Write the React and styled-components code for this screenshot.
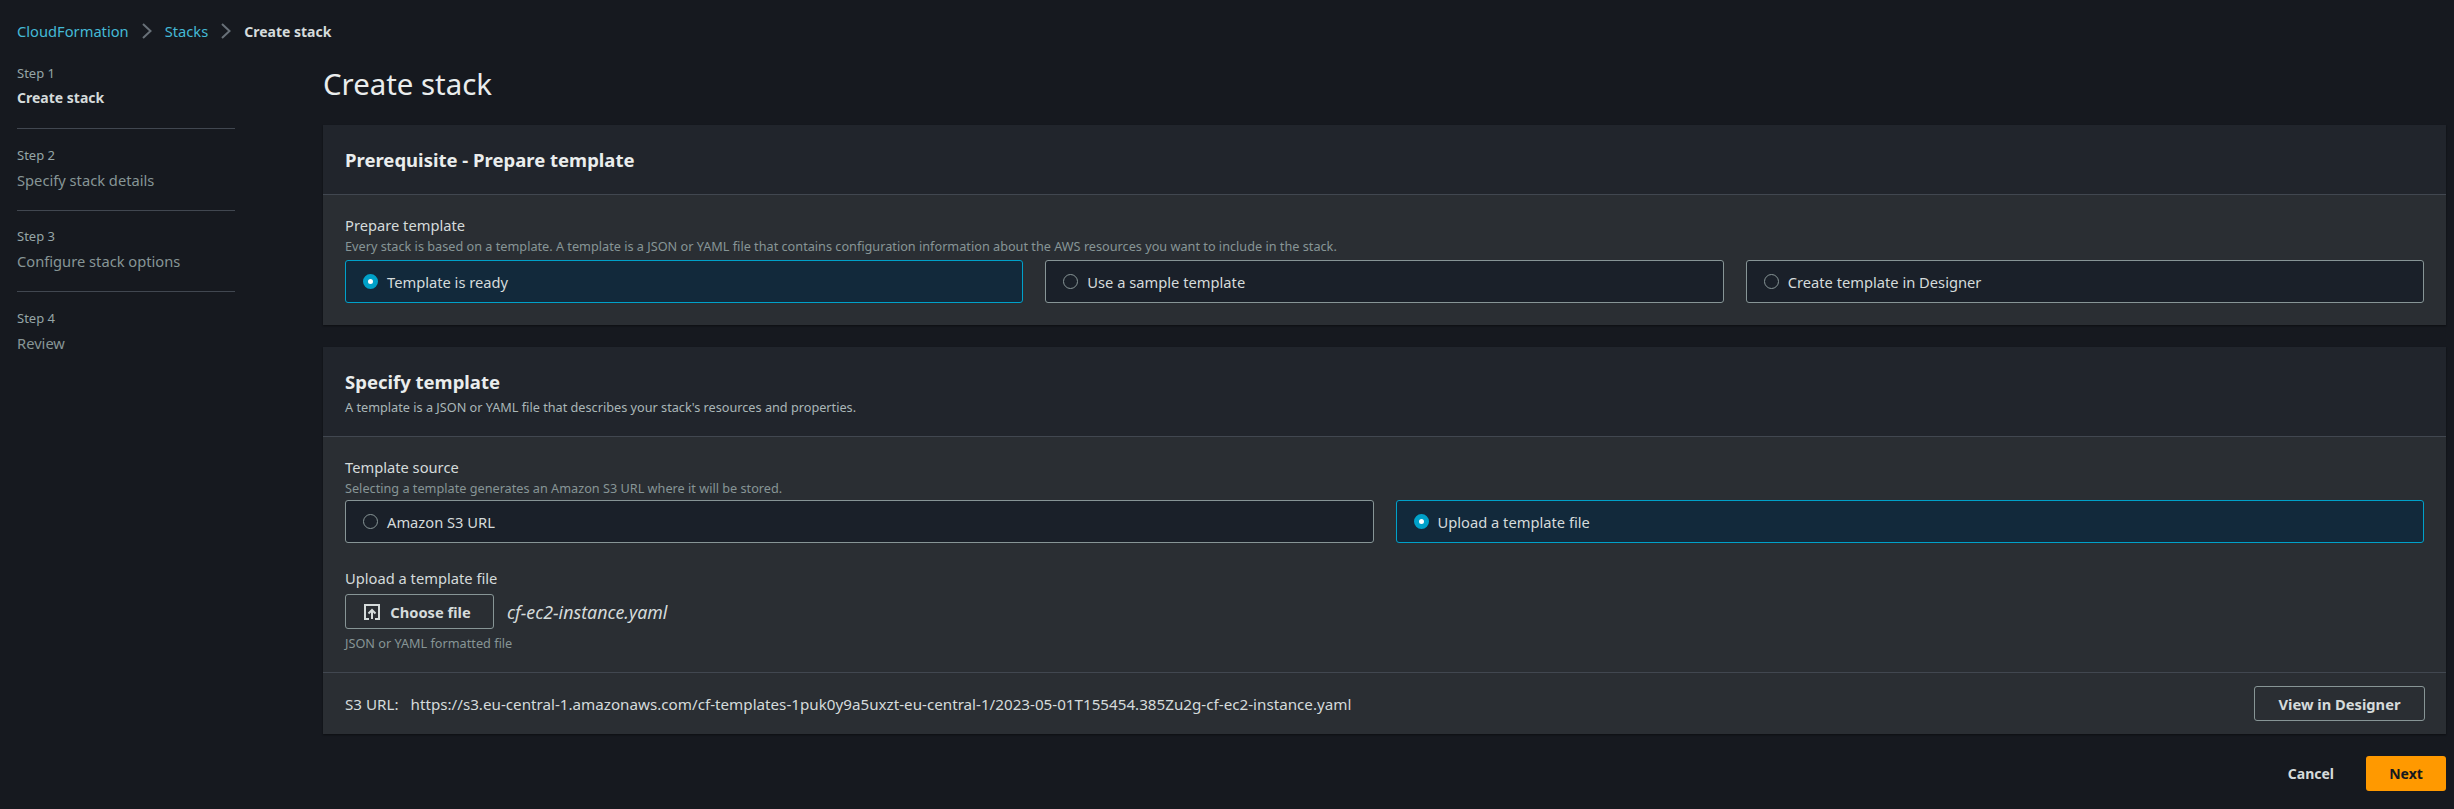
import React from 'react';
import styled, { createGlobalStyle } from 'styled-components';

const Global = createGlobalStyle`
  html, body { margin: 0; padding: 0; background: #16191f; }
  body { font-family: "Noto Sans", "Open Sans", sans-serif; color: #d5dbdb; font-size: 14.7px; }
`;

const Page = styled.div`
  width: 2454px;
  height: 809px;
  overflow: hidden;
  background: #16191f;
`;

const Breadcrumbs = styled.nav`
  display: flex;
  align-items: center;
  height: 62px;
  padding-left: 17px;
  font-size: 14.7px;
`;

const Crumb = styled.span`
  color: ${p => (p.$current ? '#d5dbdb' : '#44b9d6')};
  font-weight: ${p => (p.$current ? 700 : 400)};
  font-size: ${p => (p.$current ? '14px' : 'inherit')};
`;

const Chevron = styled.svg`
  width: 10px;
  height: 16px;
  margin: 0 13px;
`;

const Columns = styled.div`
  display: grid;
  grid-template-columns: 218px 1fr;
  column-gap: 88px;
  padding: 0 8px 0 17px;
`;

const Steps = styled.ol`
  list-style: none;
  margin: 0;
  padding: 0;
`;

const StepItem = styled.li`
  height: 64px;
  padding-top: 2px;
  border-bottom: ${p => (p.$last ? 'none' : '1px solid #414750')};
  margin-bottom: 14.5px;
`;

const StepNumber = styled.div`
  font-size: 13px;
  line-height: 18px;
  color: #95a5a6;
  margin-bottom: 6px;
`;

const StepName = styled.div`
  font-size: ${p => (p.$active ? '14px' : '14.7px')};
  line-height: 20px;
  color: ${p => (p.$active ? '#d5dbdb' : '#879596')};
  font-weight: ${p => (p.$active ? 700 : 400)};
`;

const Main = styled.main``;

const Title = styled.h1`
  margin: 3px 0 22px;
  font-size: 29.4px;
  line-height: 38px;
  font-weight: 400;
  color: #eaeded;
`;

const Card = styled.section`
  background: #2a2e33;
  box-shadow: 0 1px 2px rgba(0, 0, 0, 0.45);
  margin-bottom: 22px;
`;

const CardHeader = styled.header`
  background: #21252c;
  border-bottom: 1px solid #414750;
  padding: ${p => (p.$tall ? '23px 21px 0 22px' : '0 21px 0 22px')};
  height: ${p => (p.$tall ? '90px' : '70px')};
  display: ${p => (p.$tall ? 'block' : 'flex')};
  align-items: center;
  box-sizing: border-box;
`;

const CardTitle = styled.h2`
  margin: 0;
  font-size: 18.5px;
  line-height: 24px;
  font-weight: 700;
  color: #eaeded;
`;

const CardNote = styled.p`
  margin: 5px 0 0;
  font-size: 12.7px;
  line-height: 16px;
  color: #aab7b8;
`;

const CardBody = styled.div`
  padding: 20px 22px ${p => p.$bottom || 22}px 22px;
`;

const Label = styled.div`
  font-size: 14.7px;
  line-height: 20px;
  color: #d5dbdb;
  margin-bottom: 3px;
`;

const Hint = styled.div`
  font-size: 12.7px;
  line-height: 16px;
  color: #879596;
  margin-bottom: ${p => p.$gap || 0}px;
`;

const Tiles = styled.div`
  display: grid;
  grid-template-columns: repeat(${p => p.$count}, 1fr);
  gap: 22px;
`;

const Tile = styled.div`
  height: 43px;
  box-sizing: border-box;
  display: flex;
  align-items: center;
  gap: 9px;
  padding-left: 17px;
  border: 1px solid ${p => (p.$selected ? '#00a1c9' : '#879596')};
  border-radius: 3px;
  background: ${p => (p.$selected ? '#12293b' : '#1a2029')};
  color: #d5dbdb;
`;

const Radio = styled.span`
  width: 15px;
  height: 15px;
  box-sizing: border-box;
  border-radius: 50%;
  flex: none;
  ${p => (p.$selected
    ? 'background: #fff; border: 5px solid #00a1c9;'
    : 'border: 1.5px solid #879596;')}
`;

const UploadBlock = styled.div`
  margin-top: 25px;
`;

const UploadRow = styled.div`
  display: flex;
  align-items: center;
  gap: 13px;
  margin: 6px 0 6px;
`;

const Button = styled.button`
  height: 35px;
  box-sizing: border-box;
  font: 700 14.7px "Noto Sans", sans-serif;
  color: #d5dbdb;
  background: transparent;
  border: 1px solid #879596;
  border-radius: 3px;
  display: inline-flex;
  align-items: center;
  justify-content: center;
  gap: 10px;
  width: ${p => p.$width}px;
  padding: 0 ${p => p.$endSpace || 0}px 0 0;
`;

const FileName = styled.span`
  font-style: italic;
  font-size: 17.8px;
  color: #d5dbdb;
`;

const UrlBar = styled.div`
  border-top: 1px solid #414750;
  height: 62px;
  box-sizing: border-box;
  display: flex;
  align-items: center;
  justify-content: space-between;
  padding: 0 21px 0 22px;
  font-size: 15.2px;
`;

const UrlLabel = styled.span`
  margin-right: 12px;
`;

const Actions = styled.div`
  display: flex;
  justify-content: flex-end;
  align-items: center;
  gap: 32px;
`;

const LinkButton = styled.span`
  font-weight: 700;
  font-size: 14px;
  color: #d5dbdb;
`;

const NextButton = styled.button`
  width: 80px;
  height: 35px;
  border: none;
  border-radius: 3px;
  background: #ff9900;
  color: #16191f;
  font: 700 14px "Noto Sans", sans-serif;
`;

const ChevronIcon = () => (
  <Chevron viewBox="0 0 10 16" fill="none" stroke="#687078" strokeWidth="2">
    <path d="M1 1 L8.5 8 L1 15" />
  </Chevron>
);

const UploadIcon = () => (
  <svg width="16" height="16" viewBox="0 0 16 16" fill="none" stroke="#d5dbdb" strokeWidth="2">
    <path d="M5 15H1V1h14v14h-4" />
    <path d="M8 15V6M4.5 9.5 8 6l3.5 3.5" />
  </svg>
);

const steps = ['Create stack', 'Specify stack details', 'Configure stack options', 'Review'];

export default function App() {
  return (
    <Page>
      <Global />
      <Breadcrumbs>
        <Crumb>CloudFormation</Crumb>
        <ChevronIcon />
        <Crumb>Stacks</Crumb>
        <ChevronIcon />
        <Crumb $current>Create stack</Crumb>
      </Breadcrumbs>
      <Columns>
        <Steps>
          {steps.map((name, i) => (
            <StepItem key={name} $last={i === steps.length - 1}>
              <StepNumber>Step {i + 1}</StepNumber>
              <StepName $active={i === 0}>{name}</StepName>
            </StepItem>
          ))}
        </Steps>
        <Main>
          <Title>Create stack</Title>
          <Card>
            <CardHeader>
              <CardTitle>Prerequisite - Prepare template</CardTitle>
            </CardHeader>
            <CardBody>
              <Label>Prepare template</Label>
              <Hint $gap={6}>Every stack is based on a template. A template is a JSON or YAML file that contains configuration information about the AWS resources you want to include in the stack.</Hint>
              <Tiles $count={3}>
                <Tile $selected><Radio $selected />Template is ready</Tile>
                <Tile><Radio />Use a sample template</Tile>
                <Tile><Radio />Create template in Designer</Tile>
              </Tiles>
            </CardBody>
          </Card>
          <Card>
            <CardHeader $tall>
              <CardTitle>Specify template</CardTitle>
              <CardNote>A template is a JSON or YAML file that describes your stack's resources and properties.</CardNote>
            </CardHeader>
            <CardBody $bottom={21}>
              <Label>Template source</Label>
              <Hint $gap={4}>Selecting a template generates an Amazon S3 URL where it will be stored.</Hint>
              <Tiles $count={2}>
                <Tile><Radio />Amazon S3 URL</Tile>
                <Tile $selected><Radio $selected />Upload a template file</Tile>
              </Tiles>
              <UploadBlock>
                <Label>Upload a template file</Label>
                <UploadRow>
                  <Button $width={149} $endSpace={4}><UploadIcon />Choose file</Button>
                  <FileName>cf-ec2-instance.yaml</FileName>
                </UploadRow>
                <Hint>JSON or YAML formatted file</Hint>
              </UploadBlock>
            </CardBody>
            <UrlBar>
              <span>
                <UrlLabel>S3 URL:</UrlLabel>
                https://s3.eu-central-1.amazonaws.com/cf-templates-1puk0y9a5uxzt-eu-central-1/2023-05-01T155454.385Zu2g-cf-ec2-instance.yaml
              </span>
              <Button $width={171}>View in Designer</Button>
            </UrlBar>
          </Card>
          <Actions>
            <LinkButton>Cancel</LinkButton>
            <NextButton>Next</NextButton>
          </Actions>
        </Main>
      </Columns>
    </Page>
  );
}
